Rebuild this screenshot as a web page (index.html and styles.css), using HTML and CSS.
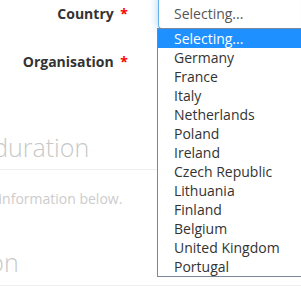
FILE: index.html
```html
<!DOCTYPE html>
<html lang="en">
<head>
  <meta charset="UTF-8">
  <meta name="viewport" content="width=device-width, initial-scale=1.0">
  <title>Registration</title>
  <link rel="stylesheet" href="styles.css">
</head>
<body>
<div class="page">
  <div class="form-row">
    <label class="form-label">Country <span class="req">*</span></label>
    <div class="field">
      <div class="select focused">Selecting...</div>
      <ul class="options">
        <li class="active">Selecting...</li>
        <li>Germany</li>
        <li>France</li>
        <li>Italy</li>
        <li>Netherlands</li>
        <li>Poland</li>
        <li>Ireland</li>
        <li>Czech Republic</li>
        <li>Lithuania</li>
        <li>Finland</li>
        <li>Belgium</li>
        <li>United Kingdom</li>
        <li>Portugal</li>
      </ul>
    </div>
  </div>

  <div class="form-row">
    <label class="form-label">Organisation <span class="req">*</span></label>
    <div class="field">
      <div class="select">Selecting...</div>
    </div>
  </div>

  <div class="section">
    <h2 class="section-title"><span class="cut-title">Project </span>duration</h2>
    <p class="section-note"><span class="cut-note">Please fill in the </span>information below.</p>
  </div>

  <div class="section">
    <h2 class="section-title"><span class="cut-last">Participati</span>on</h2>
  </div>
</div>
</body>
</html>
```

FILE: styles.css
```css
html {
  overflow: hidden;
}
body {
  margin: 0;
  font-family: "Open Sans", "DejaVu Sans", sans-serif;
  font-size: 14px;
  color: #333;
  background: #fff;
}
.page {
  margin-top: -5px;
}
.form-row {
  display: grid;
  grid-template-columns: 143px 1fr;
  column-gap: 15px;
  margin-bottom: 14px;
}
.form-label {
  text-align: right;
  font-weight: bold;
  padding-top: 9px;
  padding-right: 15px;
  line-height: 20px;
}
.req {
  color: #f00;
  margin-left: 3px;
}
.field {
  position: relative;
}
.select {
  height: 34px;
  box-sizing: border-box;
  padding: 8px 15px 0;
  line-height: 20px;
  color: #555;
  border: 1px solid #ccc;
  border-radius: 4px;
  border-right: none;
  border-top-right-radius: 0;
  border-bottom-right-radius: 0;
}
.select.focused {
  border-color: #66afe9;
  box-shadow: inset 0 1px 1px rgba(0,0,0,0.075), 0 0 8px rgba(102,175,233,0.6);
}
.options {
  position: absolute;
  top: 33px;
  left: -1px;
  width: 200px;
  margin: 0;
  padding: 0;
  list-style: none;
  background: #fff;
  border: 1px solid #7a8899;
  z-index: 2;
}
.options li {
  height: 19px;
  line-height: 19px;
  padding-left: 16px;
  color: #333;
  white-space: nowrap;
}
.options li.active {
  background: #1e90ff;
  color: #fff;
}
.section-title {
  margin: 0;
  font-size: 25px;
  font-weight: 300;
  color: #c8c8c8;
  white-space: nowrap;
  line-height: 30px;
  padding-bottom: 7px;
  border-bottom: 1px solid #eee;
}
.section {
  margin-top: 55px;
}
.section + .section {
  margin-top: 39px;
}
.section + .section .section-title {
  padding-bottom: 8px;
}
.section-note {
  margin: 20px 0 0;
  font-size: 14px;
  line-height: 18px;
  color: #ccc;
  white-space: nowrap;
}
.cut-title {
  margin-left: -92px;
}
.cut-note {
  margin-left: -107px;
}
.cut-last {
  margin-left: -122px;
}
```
